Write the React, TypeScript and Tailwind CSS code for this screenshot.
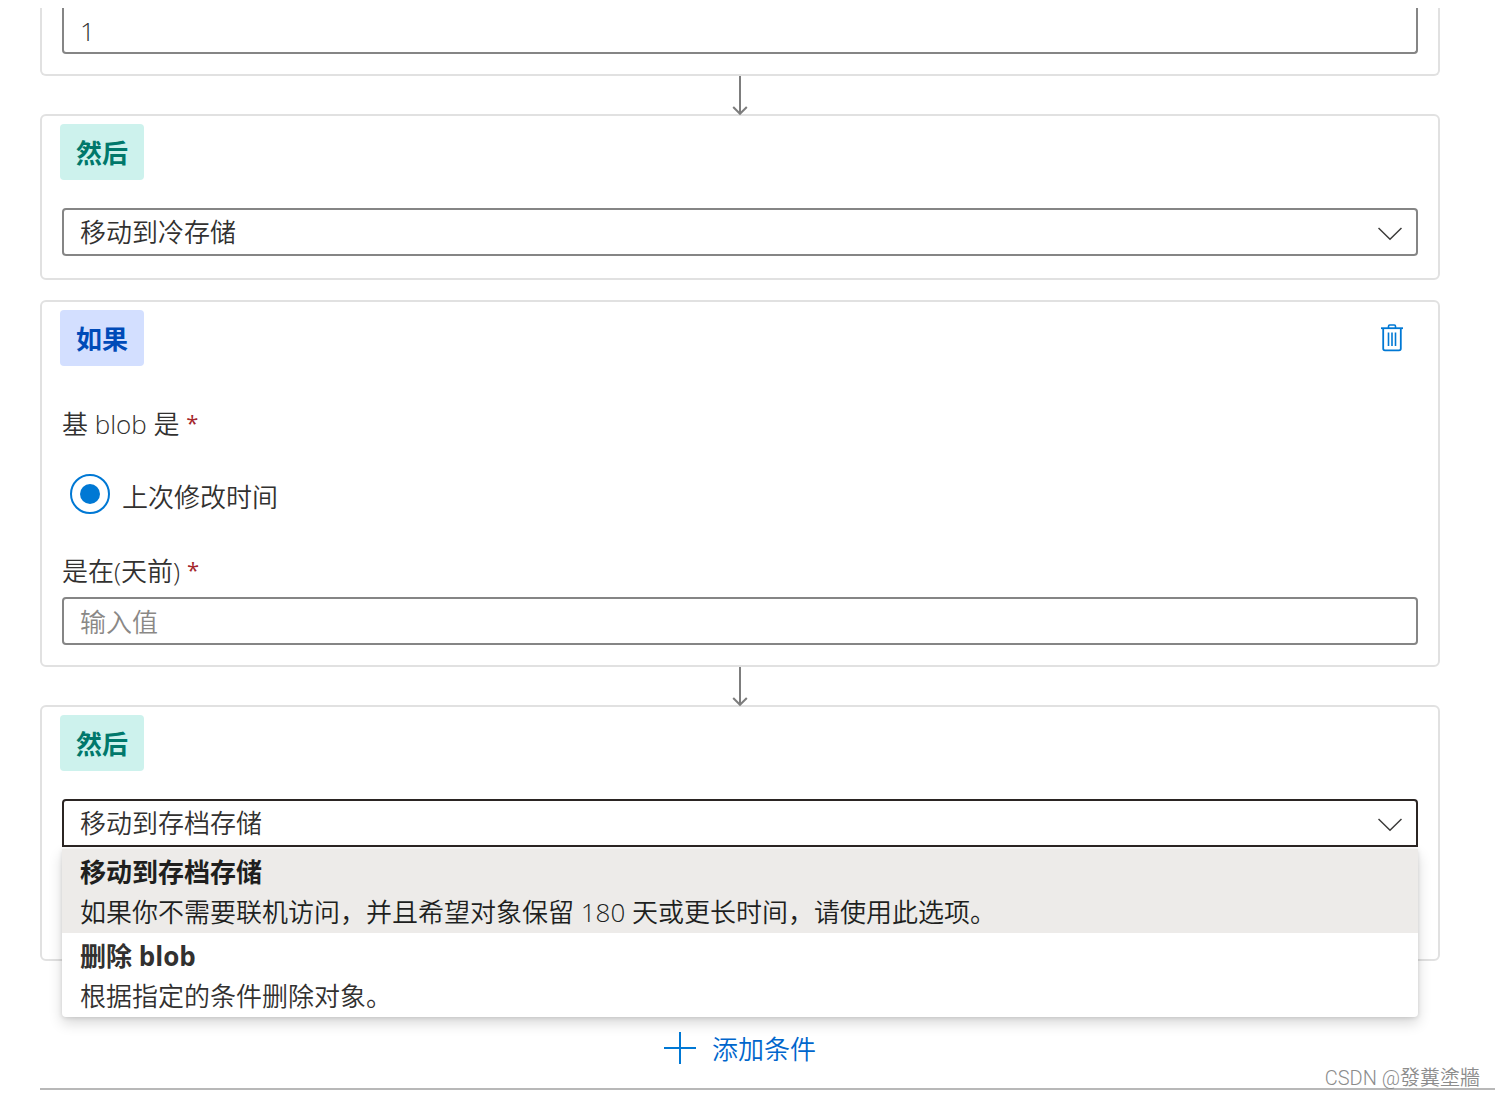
import { useState } from 'react'
import type { ReactNode } from 'react'
import { clsx } from 'clsx'

interface ActionOption {
  value: string
  description: string
}

const archiveOptions: ActionOption[] = [
  { value: '移动到存档存储', description: '如果你不需要联机访问，并且希望对象保留 180 天或更长时间，请使用此选项。' },
  { value: '删除 blob', description: '根据指定的条件删除对象。' },
]

function Tag({ kind }: { kind: 'if' | 'then' }) {
  return (
    <h2
      className={clsx(
        'flex h-14 w-[84px] items-center justify-center rounded pt-0.5 font-bold',
        kind === 'if' ? 'bg-[#d3dfff] text-[#004bb8]' : 'bg-[#cdf2ed] text-[#00786b]'
      )}
    >
      {kind === 'if' ? '如果' : '然后'}
    </h2>
  )
}

function Card({ children, className }: { children: ReactNode; className?: string }) {
  return (
    <section className={clsx('rounded-md border-2 border-[#e1e1e1] px-[18px] pt-2', className)}>
      {children}
    </section>
  )
}

function Arrow() {
  return (
    <div className="flex h-[38px] justify-center">
      <svg className="relative h-10 w-4 flex-shrink-0" viewBox="0 0 16 40" fill="none" stroke="#7d7d7d" strokeWidth="2">
        <path d="M8 0V38M1.2 31L8 37.8L14.8 31" />
      </svg>
    </div>
  )
}

function ChevronDown() {
  return (
    <svg
      className="pointer-events-none absolute right-4 top-[18px] h-4 w-6"
      viewBox="0 0 24 16"
      fill="none"
      stroke="#3b3a39"
      strokeWidth="1.5"
    >
      <path d="M0.5 2L12 13.2L23.5 2" />
    </svg>
  )
}

function TrashIcon() {
  return (
    <svg className="h-7 w-[22px]" viewBox="0 0 22 28" fill="none" stroke="#0078d4">
      <path d="M0 4.2H22" strokeWidth="1.8" />
      <path d="M7.5 4V2.2Q7.5 1 8.7 1H13.3Q14.5 1 14.5 2.2V4" strokeWidth="1.6" />
      <path d="M2.2 4V24.5Q2.2 26.3 4 26.3H18Q19.8 26.3 19.8 24.5V4" strokeWidth="1.8" />
      <path d="M7.5 8.5V22M11 8.5V22M14.5 8.5V22" strokeWidth="1.6" />
    </svg>
  )
}

function Required() {
  return <> <span className="align-[3px] text-[22px] font-normal leading-none text-[#a4262c]">*</span></>
}

interface ActionSelectProps {
  label: string
  value: string
  options: string[]
  open?: boolean
  onChange: (value: string) => void
}

function ActionSelect({ label, value, options, open, onChange }: ActionSelectProps) {
  return (
    <div className="relative">
      <select
        aria-label={label}
        value={value}
        onChange={e => onChange(e.target.value)}
        className={clsx(
          'block h-12 w-full appearance-none border-2 bg-white px-4 outline-none',
          open ? 'rounded-t border-[#2b2523]' : 'rounded border-[#858585]'
        )}
      >
        {options.map(option => <option key={option}>{option}</option>)}
      </select>
      <ChevronDown />
    </div>
  )
}

export default function App() {
  const [firstDays, setFirstDays] = useState('1')
  const [days, setDays] = useState('')
  const [coolAction, setCoolAction] = useState('移动到冷存储')
  const [archiveAction, setArchiveAction] = useState('移动到存档存储')

  return (
    <main className="relative overflow-hidden bg-white pb-[7px] pl-10 pt-2 font-['Open_Sans','Noto_Sans_CJK_SC',sans-serif] text-[26px] font-[350] leading-9 text-[#323130]">
      <div className="pr-[55px]">
        {/* Tail of the first condition */}
        <section className="rounded-b-md border-x-2 border-b-2 border-[#e1e1e1] px-5 pb-5">
          <input
            aria-label="是在(天前)"
            value={firstDays}
            onChange={e => setFirstDays(e.target.value)}
            className="block h-[46px] w-full rounded-b border-x-2 border-b-2 border-[#858585] px-4 pt-0.5 outline-none"
          />
        </section>

        <Arrow />

        <Card className="pb-[22px]">
          <Tag kind="then" />
          <div className="mt-7 px-0.5">
            <ActionSelect
              label="操作"
              value={coolAction}
              options={['移动到冷存储', '移动到存档存储', '删除 blob']}
              onChange={setCoolAction}
            />
          </div>
        </Card>

        {/* Second condition */}
        <Card className="mt-5 pb-5">
          <div className="flex items-center justify-between pr-[17px]">
            <Tag kind="if" />
            <button type="button" aria-label="删除" className="cursor-pointer">
              <TrashIcon />
            </button>
          </div>
          <div className="px-0.5">
            <fieldset>
              <legend className="pt-10">基 blob 是<Required /></legend>
              <label className="mt-8 flex h-10 items-center gap-3 pl-2">
                <input
                  type="radio"
                  name="base-blob"
                  defaultChecked
                  className="h-10 w-10 appearance-none rounded-full border-2 border-[#0078d4] bg-white bg-clip-content p-2 checked:bg-[#0078d4]"
                />
                <span className="pt-1.5">上次修改时间</span>
              </label>
            </fieldset>
            <label htmlFor="days" className="mt-[39px] block">是在(天前)<Required /></label>
            <input
              id="days"
              value={days}
              placeholder="输入值"
              onChange={e => setDays(e.target.value)}
              className="mt-2 block h-12 w-full rounded border-2 border-[#858585] px-4 pt-0.5 outline-none placeholder:text-[#8a8886]"
            />
          </div>
        </Card>

        <Arrow />

        <Card className="pb-28">
          <Tag kind="then" />
          <div className="relative mt-7 px-0.5">
            <ActionSelect
              label="操作"
              value={archiveAction}
              options={archiveOptions.map(o => o.value)}
              onChange={setArchiveAction}
              open
            />
            <ul
              role="listbox"
              className="absolute inset-x-0.5 top-[50px] z-10 rounded-b bg-white shadow-[0_6px_14px_rgba(0,0,0,0.16),0_1px_4px_rgba(0,0,0,0.12)]"
            >
              {archiveOptions.map(option => (
                <li
                  key={option.value}
                  role="option"
                  aria-selected={option.value === archiveAction}
                  onClick={() => setArchiveAction(option.value)}
                  className={clsx(
                    'cursor-pointer px-[18px] pb-px pt-[3px] leading-10',
                    option.value === archiveAction && 'bg-[#edebe9] text-[#201f1e]'
                  )}
                >
                  <p className="font-bold">{option.value}</p>
                  <p>{option.description}</p>
                </li>
              ))}
            </ul>
          </div>
        </Card>

        <div className="flex justify-center pt-[68px]">
          <button type="button" className="flex cursor-pointer items-center gap-4 text-[#0066cc]">
            <svg className="h-8 w-8" viewBox="0 0 32 32" stroke="#0078d4" strokeWidth="2">
              <path d="M16 0V32M0 16H32" />
            </svg>
            <span className="pt-0.5">添加条件</span>
          </button>
        </div>
      </div>

      <hr className="mt-[21px] border-t-2 border-[#b8b8b8]" />
      <span className="absolute bottom-[5px] right-[15px] font-['Roboto','Noto_Sans_CJK_TC',sans-serif] text-xl leading-7 text-[#8c8c8c] [text-shadow:-1px_-1px_0_#ffffff]">
        CSDN @發糞塗牆
      </span>
    </main>
  )
}
